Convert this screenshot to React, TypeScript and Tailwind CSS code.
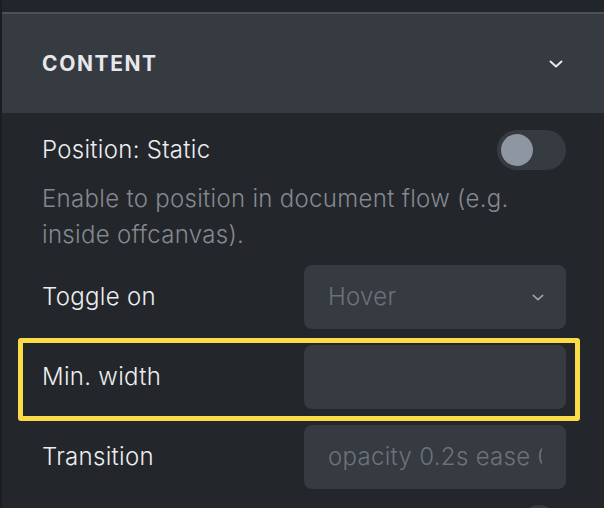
import React from "react";

const font = { fontFamily: "Inter, 'Noto Sans', sans-serif" };

function Chevron({ className }: { className?: string }) {
  return (
    <svg className={className} viewBox="0 0 14 8" fill="none">
      <path d="M1.5 1.5 L7 6.5 L12.5 1.5" stroke="currentColor" strokeWidth="2" strokeLinecap="round" strokeLinejoin="round" />
    </svg>
  );
}

export default function App() {
  return (
    <div className="w-[604px] h-[508px] overflow-hidden bg-[#23262b] border-l-2 border-[#1b1d21] flex flex-col" style={font}>
      <div className="h-[12px] shrink-0 bg-[#222529]" />
      <div className="h-[2px] shrink-0 bg-[#4a5259]" />
      <div className="h-[99px] shrink-0 bg-[#363a41] flex items-center justify-between pl-[40px] pr-[41px]">
        <span className="text-[21px] font-bold tracking-[1.6px] text-[#e6e8eb]">CONTENT</span>
        <Chevron className="w-[14px] h-[8px] text-[#e6e8eb]" />
      </div>
      <div className="flex flex-col pl-[40px] pr-[38px] pt-[17px] tracking-[0.3px]">
        <div className="h-[40px] flex items-center justify-between">
          <span className="text-[24px] font-light text-[#eceef0]">Position: Static</span>
          <div className="w-[69px] h-[40px] rounded-full bg-[#363a41] flex items-center px-[4px]">
            <div className="w-[32px] h-[32px] rounded-full bg-[#8e96a1]" />
          </div>
        </div>
        <p className="mt-[11px] text-[24px] font-light leading-[36px] text-[#85898f]">
          Enable to position in document flow (e.g. inside offcanvas).
        </p>
        <div className="mt-[12px] flex flex-col gap-[16px]">
          <div className="h-[64px] flex items-center justify-between">
            <span className="text-[24px] font-light text-[#eceef0]">Toggle on</span>
            <div className="w-[262px] h-[64px] rounded-[8px] bg-[#363a41] flex items-center justify-between pl-[24px] pr-[22px]">
              <span className="text-[24px] font-light text-[#6d727a]">Hover</span>
              <Chevron className="w-[12px] h-[7px] text-[#9aa0a8]" />
            </div>
          </div>
          <div className="relative h-[64px] flex items-center justify-between">
            <span className="text-[24px] font-light text-[#eceef0]">Min. width</span>
            <div className="w-[262px] h-[64px] rounded-[8px] bg-[#363a41]" />
            <div className="absolute -left-[24px] -right-[14px] -top-[7px] -bottom-[12px] border-[5px] border-[#fbdc46] rounded-[3px] pointer-events-none" />
          </div>
          <div className="h-[64px] flex items-center justify-between">
            <span className="text-[24px] font-light text-[#eceef0]">Transition</span>
            <div className="w-[262px] h-[64px] rounded-[8px] bg-[#363a41] flex items-center pl-[24px] pr-[24px]">
              <span className="block w-full text-[24px] font-light text-[#6d727a] whitespace-nowrap overflow-hidden">opacity 0.2s ease 0s</span>
            </div>
          </div>
          <div className="h-[64px] flex items-start justify-end pr-[10px]">
            <div className="w-[34px] h-[34px] rounded-full bg-[#363a41]" />
          </div>
        </div>
      </div>
    </div>
  );
}
